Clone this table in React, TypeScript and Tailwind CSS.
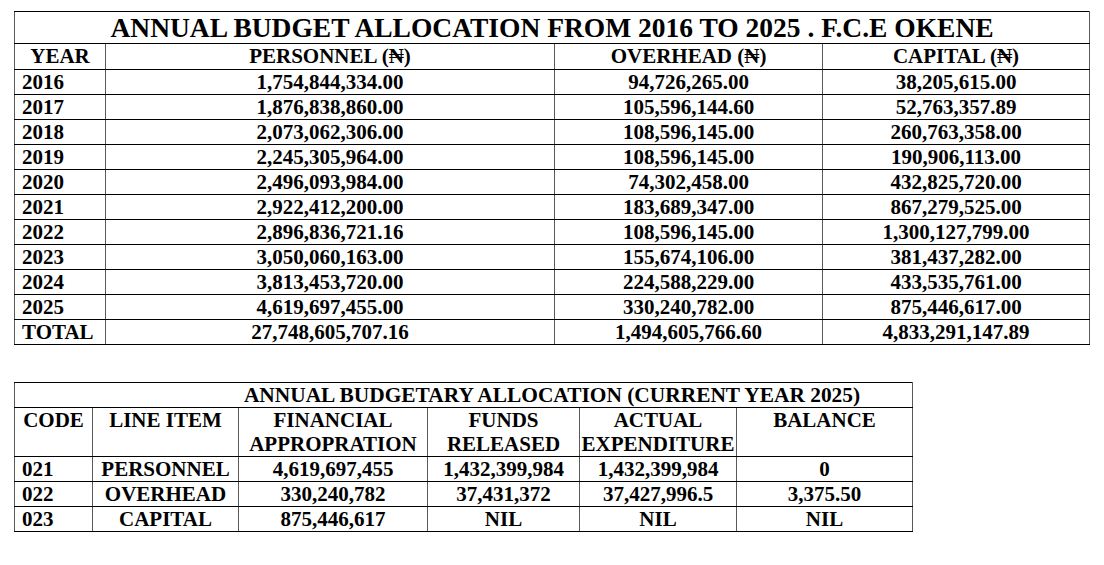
import React from 'react';

// Yearly allocation rows: year, personnel, overhead, capital
const YEARLY: [string, string, string, string][] = [
  ['2016', '1,754,844,334.00', '94,726,265.00', '38,205,615.00'],
  ['2017', '1,876,838,860.00', '105,596,144.60', '52,763,357.89'],
  ['2018', '2,073,062,306.00', '108,596,145.00', '260,763,358.00'],
  ['2019', '2,245,305,964.00', '108,596,145.00', '190,906,113.00'],
  ['2020', '2,496,093,984.00', '74,302,458.00', '432,825,720.00'],
  ['2021', '2,922,412,200.00', '183,689,347.00', '867,279,525.00'],
  ['2022', '2,896,836,721.16', '108,596,145.00', '1,300,127,799.00'],
  ['2023', '3,050,060,163.00', '155,674,106.00', '381,437,282.00'],
  ['2024', '3,813,453,720.00', '224,588,229.00', '433,535,761.00'],
  ['2025', '4,619,697,455.00', '330,240,782.00', '875,446,617.00'],
  ['TOTAL', '27,748,605,707.16', '1,494,605,766.60', '4,833,291,147.89'],
];

// Current year line items
const CURRENT: [string, string, string, string, string, string][] = [
  ['021', 'PERSONNEL', '4,619,697,455', '1,432,399,984', '1,432,399,984', '0'],
  ['022', 'OVERHEAD', '330,240,782', '37,431,372', '37,427,996.5', '3,375.50'],
  ['023', 'CAPITAL', '875,446,617', 'NIL', 'NIL', 'NIL'],
];

const cell =
  'font-[Liberation_Serif] font-bold border-y border-y-black border-x border-x-[#5a5a5a] p-0 leading-[24px] text-center';

export default function App() {
  return (
    <div className="min-h-[565px] bg-white text-black font-[Liberation_Serif] font-bold">
      <div className="pt-[11px] pl-[14px]">
        <table className="font-[Liberation_Serif] table-fixed border-collapse w-[1076px]">
          <colgroup>
            <col className="w-[91px]" />
            <col className="w-[449px]" />
            <col className="w-[268px]" />
            <col className="w-[267px]" />
          </colgroup>
          <thead>
            <tr>
              <th colSpan={4} className={`${cell} text-[27.5px] leading-[31px]`}>
                ANNUAL BUDGET ALLOCATION FROM 2016 TO 2025 . F.C.E OKENE
              </th>
            </tr>
            <tr className="text-[21px]">
              <th className={`${cell} leading-[25px]`}>YEAR</th>
              <th className={`${cell} leading-[25px]`}>PERSONNEL (₦)</th>
              <th className={`${cell} leading-[25px]`}>OVERHEAD (₦)</th>
              <th className={`${cell} leading-[25px]`}>CAPITAL (₦)</th>
            </tr>
          </thead>
          <tbody className="text-[21px]">
            {YEARLY.map(([year, personnel, overhead, capital]) => (
              <tr key={year}>
                <td className={`${cell} text-left pl-[7px]`}>{year}</td>
                <td className={cell}>{personnel}</td>
                <td className={cell}>{overhead}</td>
                <td className={cell}>{capital}</td>
              </tr>
            ))}
          </tbody>
        </table>

        <table className="font-[Liberation_Serif] table-fixed border-collapse w-[899px] mt-[37px]">
          <colgroup>
            <col className="w-[78px]" />
            <col className="w-[146px]" />
            <col className="w-[189px]" />
            <col className="w-[152px]" />
            <col className="w-[157px]" />
            <col className="w-[176px]" />
          </colgroup>
          <thead className="text-[21px]">
            <tr>
              <th colSpan={6} className={`${cell} text-[21.4px] leading-[23px] pl-[177px]`}>
                ANNUAL BUDGETARY ALLOCATION (CURRENT YEAR 2025)
              </th>
            </tr>
            <tr className="align-top">
              <th className={cell}>CODE</th>
              <th className={cell}>LINE ITEM</th>
              <th className={cell}>
                FINANCIAL
                <br />
                APPROPRATION
              </th>
              <th className={cell}>
                FUNDS
                <br />
                RELEASED
              </th>
              <th className={cell}>
                ACTUAL
                <br />
                EXPENDITURE
              </th>
              <th className={cell}>BALANCE</th>
            </tr>
          </thead>
          <tbody className="text-[21px]">
            {CURRENT.map(([code, item, approp, released, actual, balance]) => (
              <tr key={code}>
                <td className={`${cell} text-left pl-[7px]`}>{code}</td>
                <td className={cell}>{item}</td>
                <td className={cell}>{approp}</td>
                <td className={cell}>{released}</td>
                <td className={cell}>{actual}</td>
                <td className={cell}>{balance}</td>
              </tr>
            ))}
          </tbody>
        </table>
      </div>
    </div>
  );
}
